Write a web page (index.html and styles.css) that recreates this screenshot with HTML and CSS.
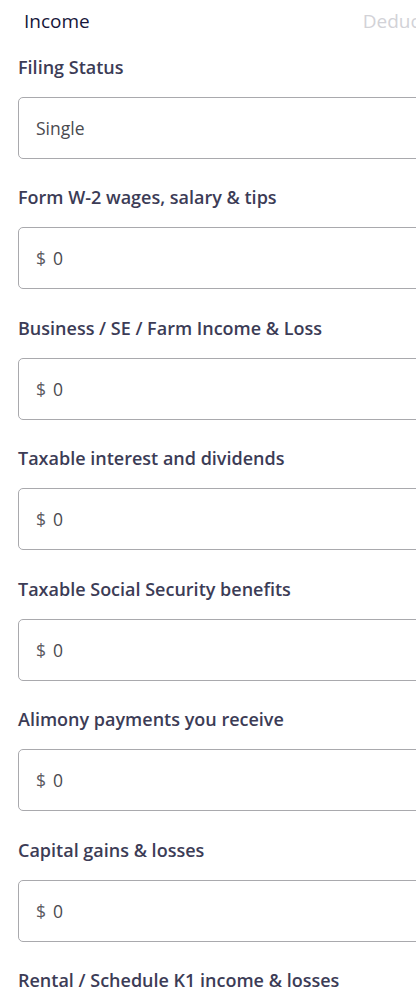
FILE: index.html
```html
<!DOCTYPE html>
<html lang="en">
<head>
<meta charset="utf-8">
<title>Income</title>
<link rel="stylesheet" href="styles.css">
</head>
<body>
<div class="page">
  <nav class="tabs">
    <span class="tab active">Income</span>
    <span class="tab">Deductions</span>
  </nav>
  <form class="fields">
    <div class="field">
      <label class="label">Filing Status</label>
      <div class="input"><span class="value">Single</span></div>
    </div>
    <div class="field">
      <label class="label">Form W-2 wages, salary &amp; tips</label>
      <div class="input"><span class="cur">$</span><span class="value">0</span></div>
    </div>
    <div class="field">
      <label class="label">Business / SE / Farm Income &amp; Loss</label>
      <div class="input"><span class="cur">$</span><span class="value">0</span></div>
    </div>
    <div class="field">
      <label class="label">Taxable interest and dividends</label>
      <div class="input"><span class="cur">$</span><span class="value">0</span></div>
    </div>
    <div class="field">
      <label class="label">Taxable Social Security benefits</label>
      <div class="input"><span class="cur">$</span><span class="value">0</span></div>
    </div>
    <div class="field">
      <label class="label">Alimony payments you receive</label>
      <div class="input"><span class="cur">$</span><span class="value">0</span></div>
    </div>
    <div class="field">
      <label class="label">Capital gains &amp; losses</label>
      <div class="input"><span class="cur">$</span><span class="value">0</span></div>
    </div>
    <div class="field last">
      <label class="label">Rental / Schedule K1 income &amp; losses</label>
    </div>
  </form>
</div>
</body>
</html>
```
FILE: styles.css
```css
html, body {
  margin: 0;
  padding: 0;
  background: #ffffff;
  overflow: hidden;
}
body {
  font-family: "Open Sans", "Noto Sans", sans-serif;
  width: 416px;
  height: 1007px;
}
.page {
  width: 416px;
  height: 1007px;
  overflow: hidden;
}
.tabs {
  display: flex;
  padding: 7px 0 0 24px;
  height: 28px;
  white-space: nowrap;
}
.tab {
  font-size: 19px;
  font-weight: 500;
  line-height: 28px;
  color: #d2d2d7;
  margin-right: 273px;
}
.tab.active {
  color: #16163a;
}
.fields {
  display: flex;
  flex-direction: column;
  padding: 19.5px 0 0 18px;
}
.field {
  display: flex;
  flex-direction: column;
  height: 130.5px;
}
.field.last {
  height: auto;
}
.label {
  font-size: 18px;
  font-weight: 600;
  line-height: 24px;
  color: #3c3c56;
  margin-bottom: 18px;
  white-space: nowrap;
}
.input {
  width: 420px;
  height: 62px;
  box-sizing: border-box;
  border: 1px solid #a9a9ad;
  border-radius: 5px;
  display: flex;
  align-items: center;
  padding-left: 17px;
  gap: 7px;
  font-size: 17.5px;
  color: #4a4a4f;
}
.cur {
  color: #5a5a5f;
}
```
